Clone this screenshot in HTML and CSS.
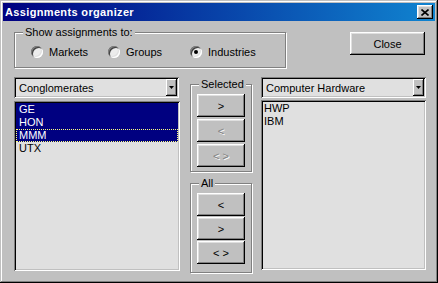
FILE: index.html
```html
<!DOCTYPE html>
<html>
<head>
  <title>Assignments organizer</title>
  <link rel="stylesheet" href="styles.css">
</head>
<body>
  <div class="window">
    <div class="titlebar">
      <span class="title">Assignments organizer</span>
      <span class="title-close">
        <svg width="8" height="7" viewBox="0 0 8 7"><path d="M0.5 0.5L7.5 6.5M7.5 0.5L0.5 6.5" stroke="#000" stroke-width="1.6" fill="none"/></svg>
      </span>
    </div>

    <div class="content">
      <div class="top-row">
        <div class="group show-group">
          <span class="legend">Show assignments to:</span>
          <label class="radio radio-markets"><span class="dot"></span>Markets</label>
          <label class="radio radio-groups"><span class="dot"></span>Groups</label>
          <label class="radio"><span class="dot checked"></span>Industries</label>
        </div>
        <button class="btn close-btn">Close</button>
      </div>

      <div class="main-row">
        <div class="left-col">
          <div class="combo">
            <span class="combo-text">Conglomerates</span>
            <span class="drop"><svg width="5" height="3" viewBox="0 0 5 3"><path d="M0 0h5L2.5 3z" fill="#000"/></svg></span>
          </div>
          <ul class="list left-list">
            <li class="selected">GE</li>
            <li class="selected">HON</li>
            <li class="selected focused">MMM</li>
            <li>UTX</li>
          </ul>
        </div>

        <div class="middle-col">
          <div class="group move-group sel-group">
            <span class="legend">Selected</span>
            <div class="btn-stack">
              <button class="btn small-btn">&gt;</button>
              <button class="btn small-btn disabled">&lt;</button>
              <button class="btn small-btn disabled">&lt; &gt;</button>
            </div>
          </div>
          <div class="group move-group all-group">
            <span class="legend">All</span>
            <div class="btn-stack">
              <button class="btn small-btn">&lt;</button>
              <button class="btn small-btn">&gt;</button>
              <button class="btn small-btn">&lt; &gt;</button>
            </div>
          </div>
        </div>

        <div class="right-col">
          <div class="combo">
            <span class="combo-text">Computer Hardware</span>
            <span class="drop"><svg width="5" height="3" viewBox="0 0 5 3"><path d="M0 0h5L2.5 3z" fill="#000"/></svg></span>
          </div>
          <ul class="list right-list">
            <li>HWP</li>
            <li>IBM</li>
          </ul>
        </div>
      </div>
    </div>
  </div>
</body>
</html>
```

FILE: styles.css
```css
* {
  box-sizing: border-box;
}
body {
  margin: 0;
  background-color: #c0c0c0;
  font-family: "Liberation Sans", Arial, sans-serif;
  font-size: 11px;
  color: #000;
}
.window {
  width: 438px;
  height: 283px;
  padding: 3px;
  background-color: #c0c0c0;
  box-shadow: inset -1px -1px #000, inset 1px 1px #c0c0c0, inset -2px -2px #808080, inset 2px 2px #fff;
}
.titlebar {
  height: 18px;
  display: flex;
  align-items: center;
  justify-content: space-between;
  padding: 0 2px;
  background: linear-gradient(to right, #000080, #1084d0);
  color: #fff;
}
.title {
  font-weight: bold;
  letter-spacing: 0.35px;
}
.title-close {
  width: 16px;
  height: 14px;
  display: flex;
  align-items: center;
  justify-content: center;
  background-color: #c0c0c0;
  box-shadow: inset -1px -1px #000, inset 1px 1px #fff, inset -2px -2px #808080, inset 2px 2px #dfdfdf;
}
.content {
  padding: 11px 0 0 11px;
}
.top-row {
  display: flex;
  align-items: flex-start;
}
.group {
  position: relative;
  border: 1px solid #808080;
  box-shadow: inset 1px 1px #fff, 1px 1px #fff;
}
.legend {
  position: absolute;
  top: -7px;
  left: 8px;
  padding: 0 2px;
  line-height: 13px;
  background-color: #c0c0c0;
}
.show-group {
  width: 272px;
  height: 36px;
  display: flex;
  padding: 13px 0 0 16px;
}
.radio {
  display: flex;
  align-items: center;
  gap: 6px;
  height: 12px;
}
.radio-markets {
  width: 77px;
}
.radio-groups {
  width: 82px;
}
.dot {
  position: relative;
  width: 12px;
  height: 12px;
  border-radius: 50%;
  background-color: #ececec;
  box-shadow: inset 1px 1px #808080, inset -1px -1px #fff, inset 2px 2px #404040, inset -2px -2px #dfdfdf;
}
.dot.checked::after {
  content: "";
  position: absolute;
  left: 4px;
  top: 4px;
  width: 4px;
  height: 4px;
  border-radius: 50%;
  background-color: #000;
}
.btn {
  border: none;
  padding: 0;
  background-color: #c0c0c0;
  font-family: inherit;
  font-size: 11px;
  color: #000;
  box-shadow: inset -1px -1px #000, inset 1px 1px #fff, inset -2px -2px #808080, inset 2px 2px #dfdfdf;
}
.btn.disabled {
  color: #808080;
  text-shadow: 1px 1px #fff;
}
.close-btn {
  margin-left: 64px;
  width: 75px;
  height: 23px;
}
.main-row {
  display: flex;
  align-items: flex-start;
  margin-top: 9px;
}
.left-col {
  width: 166px;
}
.middle-col {
  width: 62px;
  margin-left: 10px;
  padding-top: 7px;
}
.right-col {
  width: 165px;
  margin-left: 9px;
}
.combo {
  height: 21px;
  display: flex;
  align-items: center;
  justify-content: space-between;
  padding: 2px;
  background-color: #e0e0e0;
  box-shadow: inset 1px 1px #808080, inset -1px -1px #fff, inset 2px 2px #000, inset -2px -2px #c0c0c0;
}
.left-col .combo {
  width: 165px;
}
.combo-text {
  padding-left: 3px;
}
.drop {
  width: 11px;
  height: 17px;
  display: flex;
  align-items: center;
  justify-content: center;
  background-color: #c0c0c0;
  box-shadow: inset -1px -1px #000, inset 1px 1px #fff, inset -2px -2px #808080;
}
.list {
  list-style: none;
  margin: 3px 0 0;
  padding: 2px;
  height: 170px;
  background-color: #e0e0e0;
  box-shadow: inset 1px 1px #808080, inset -1px -1px #fff, inset 2px 2px #000, inset -2px -2px #c0c0c0;
}
.right-list {
  margin-top: 2px;
}
.list li {
  height: 13px;
  line-height: 13px;
  padding-left: 3px;
}
.right-list li {
  padding-left: 1px;
}
.left-list li.selected {
  background-color: #000080;
  color: #fff;
}
.left-list li.focused {
  outline: 1px dotted #ffff80;
  outline-offset: -1px;
}
.sel-group {
  height: 88px;
}
.all-group {
  height: 90px;
  margin-top: 11px;
}
.btn-stack {
  display: flex;
  flex-direction: column;
  gap: 1px;
  padding: 9px 0 0 6px;
}
.sel-group .btn-stack {
  gap: 2px;
}
.small-btn {
  width: 48px;
  height: 23px;
}
```
